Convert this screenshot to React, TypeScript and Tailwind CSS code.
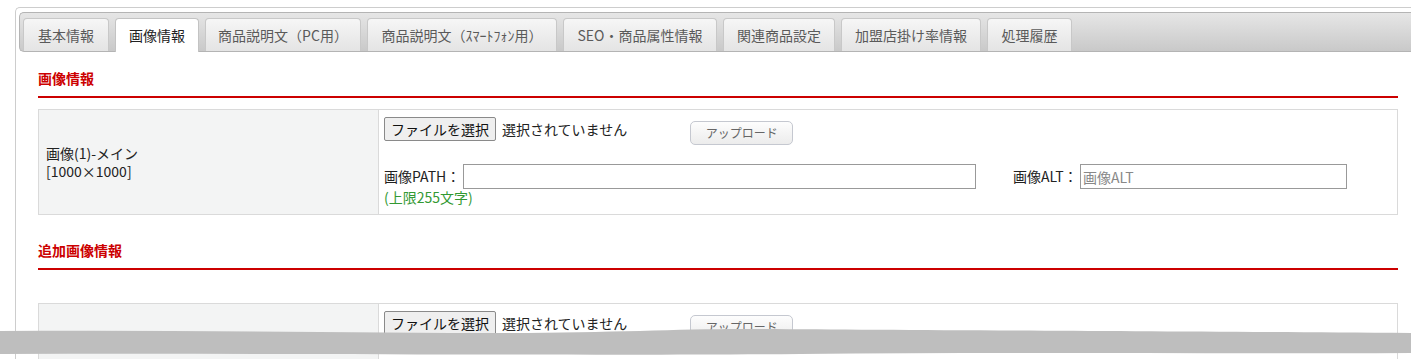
import React from 'react';

const tabs = [
  { label: '基本情報', w: 86 },
  { label: '画像情報', w: 84, active: true },
  { label: '商品説明文（PC用）', w: 156 },
  { label: '商品説明文（ｽﾏｰﾄﾌｫﾝ用）', w: 190 },
  { label: 'SEO・商品属性情報', w: 154 },
  { label: '関連商品設定', w: 112 },
  { label: '加盟店掛け率情報', w: 140 },
  { label: '処理履歴', w: 85 },
];

function SectionTitle({ title }: { title: string }) {
  return (
    <div>
      <div className="h-[24px] text-[14px] font-bold leading-[24px] text-[#cc0000]">{title}</div>
      <div className="mt-[6px] h-[2px] bg-[#cc0000]" />
    </div>
  );
}

function FileRow() {
  return (
    <div className="flex items-start">
      <button className="h-[24px] rounded-[2px] border border-[#8a8a8a] bg-[#efefef] px-[6px] text-[14px] leading-[20px] text-[#111]">
        ファイルを選択
      </button>
      <span className="ml-[6px] text-[14px] leading-[24px] text-[#222]">選択されていません</span>
      <button className="ml-[63px] mt-[4px] h-[24px] w-[103px] rounded-[5px] border border-[#c5c8d0] bg-gradient-to-b from-[#fdfdfd] to-[#ececec] text-[12px] text-[#666]">
        アップロード
      </button>
    </div>
  );
}

export default function App() {
  return (
    <div
      className="relative h-[359px] w-[1411px] overflow-hidden bg-white"
      style={{ fontFamily: '"Noto Sans CJK JP", "Noto Sans", sans-serif' }}
    >
      <div className="ml-[15px] mt-[7px] rounded-tl-[5px] border-l border-t border-[#cdcdcd] pl-[3px] pt-[4px]">
        {/* Tab bar */}
        <div className="flex h-[40px] items-end gap-[6px] rounded-l-[5px] border border-r-0 border-[#b4b4b4] bg-gradient-to-b from-[#e6e6e6] to-[#c9c9c9] pl-[3px]">
          {tabs.map((t) => (
            <div
              key={t.label}
              style={{ width: t.w }}
              className={
                t.active
                  ? 'relative -mb-px flex h-[34px] items-center justify-center rounded-t-[4px] border border-b-0 border-[#c3c3c3] bg-white text-[14px] text-[#222]'
                  : 'flex h-[33px] items-center justify-center rounded-t-[4px] border border-b-0 border-[#c8c8c8] bg-gradient-to-b from-[#f6f6f6] to-[#e4e4e4] text-[14px] text-[#5a5a5a]'
              }
            >
              {t.label}
            </div>
          ))}
        </div>

        {/* Content */}
        <div className="pl-[19px] pr-[13px] pt-[14px]">
          <SectionTitle title="画像情報" />

          <div className="mt-[11px] flex h-[106px] border border-[#dadada]">
            <div className="flex w-[340px] flex-col justify-center border-r border-[#dadada] bg-[#f3f4f4] pl-[7px] text-[14px] leading-[18px] text-[#222]">
              <div>画像(1)-メイン</div>
              <div>[1000×1000]</div>
            </div>
            <div className="flex-1 pl-[5px] pt-[7px]">
              <FileRow />
              <div className="mt-[19px] flex items-center text-[14px] text-[#222]">
                <span className="w-[79px] whitespace-nowrap">画像PATH：</span>
                <input className="h-[25px] w-[513px] border border-[#999] bg-white outline-none" />
                <span className="ml-[37px] w-[67px] whitespace-nowrap">画像ALT：</span>
                <input
                  placeholder="画像ALT"
                  className="h-[25px] w-[267px] border border-[#999] bg-white px-[2px] text-[14px] outline-none placeholder:text-[#888]"
                />
              </div>
              <div className="text-[14px] leading-[17px] text-[#339933]">(上限255文字)</div>
            </div>
          </div>

          <div className="mt-[23px]">
            <SectionTitle title="追加画像情報" />
          </div>

          <div className="mt-[33px] flex h-[106px] border border-[#dadada]">
            <div className="w-[340px] border-r border-[#dadada] bg-[#f3f4f4]" />
            <div className="flex-1 pl-[5px] pt-[7px]">
              <FileRow />
            </div>
          </div>
        </div>
      </div>

      {/* torn edge */}
      <svg className="absolute bottom-0 left-0" width="1411" height="32" viewBox="0 0 1411 32">
        <path
          d="M0 4 C 150 3, 300 5, 450 6 C 600 7, 680 1, 760 2 C 900 3, 1100 4, 1411 6 L1411 26 C 1200 27, 1000 25, 800 27 C 600 29, 300 26, 0 27 Z"
          fill="#bebebe"
        />
      </svg>
    </div>
  );
}
